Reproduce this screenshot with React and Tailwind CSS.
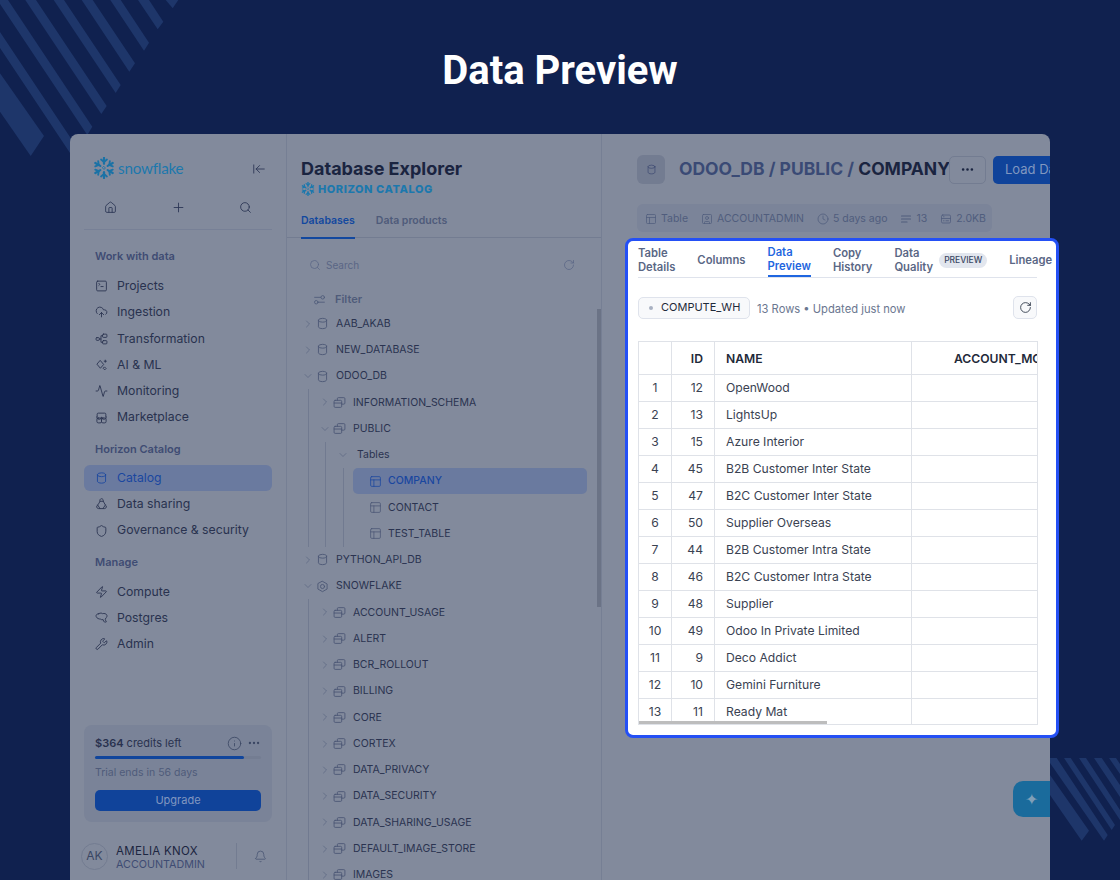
import React from 'react';
import {
  House, Plus, Search, ArrowLeftToLine, SquareTerminal, CloudUpload, Activity, Shield, Zap, Wrench,
  Bell, Info, Ellipsis, RotateCw, ChevronRight, ChevronDown, Clock, SquareUser, PanelsTopLeft,
} from 'lucide-react';

const inter = { fontFamily: 'Inter, sans-serif' };

const Ico = ({ children, className = 'w-[14px] h-[14px]' }) => (
  <svg viewBox="0 0 24 24" fill="none" stroke="currentColor" strokeWidth="1.6" strokeLinecap="round" strokeLinejoin="round" className={className}>
    {children}
  </svg>
);

const Db = (p) => <Ico {...p}><ellipse cx="12" cy="6" rx="7.5" ry="3.5" /><path d="M4.5 6v12c0 1.9 3.4 3.5 7.5 3.5s7.5-1.6 7.5-3.5V6" /></Ico>;
const Schema = (p) => <Ico {...p}><path d="M8 8V5a2 2 0 0 1 2-2h10a2 2 0 0 1 2 2v8a2 2 0 0 1-2 2h-4" /><rect x="2" y="8" width="14" height="13" rx="2" /><path d="M2 13h14" /></Ico>;
const Hex = (p) => <Ico {...p}><path d="M12 2.5l8.5 4.8v9.4L12 21.5l-8.5-4.8V7.3z" /><circle cx="12" cy="12" r="3.8" /></Ico>;
const FilterIco = (p) => <Ico {...p}><path d="M3 8h11M10 17h11" /><circle cx="18" cy="8" r="3.2" /><circle cx="6" cy="17" r="3.2" /></Ico>;
const Transform = (p) => <Ico {...p}><rect x="2" y="9.5" width="6" height="5" rx="1.5" /><rect x="14" y="3" width="8" height="6" rx="1.5" /><rect x="14" y="15" width="8" height="6" rx="1.5" /><path d="M8 12h3M14 6h-3v12h3" /></Ico>;
const Spark = (p) => <Ico {...p}><path d="M10 4l6 7-6 7-6-7z" /><path d="M18 16l2.5 2.5L18 21l-2.5-2.5z" /><path d="M19 3v4M17 5h4" /></Ico>;
const Market = (p) => <Ico {...p}><path d="M4 10V5a2 2 0 0 1 2-2h12a2 2 0 0 1 2 2v5" /><path d="M3 10a4.5 4.5 0 0 0 9 0 4.5 4.5 0 0 0 9 0" /><rect x="3.5" y="12" width="8.5" height="9" rx="2.5" /><rect x="12" y="12" width="8.5" height="9" rx="2.5" /></Ico>;
const Share = (p) => <Ico {...p}><path d="M9 6.5a3.2 3.2 0 1 1 6 0l4 7.2a3.6 3.6 0 0 1-1.5 6.8h-11a3.6 3.6 0 0 1-1.5-6.8z" /><path d="M9 7l6 0M5 14l4 6M19 14l-4 6" /></Ico>;
const Elephant = (p) => <Ico {...p}><path d="M7 4c3-2 6-1 7 0 3-1 7 0 8 3 .6 2-.5 4-2 5l-1 3c0 2 2 3 2 4-1 1-4 1-5-1l-1-3c-2 .5-4 0-5-1-2 0-7-1-8-5-.6-3 2-5 5-5z" /></Ico>;
const Rows = (p) => <Ico {...p}><path d="M3 6h18M3 12h18M3 18h11" strokeWidth="2.4" /></Ico>;
const Storage = (p) => <Ico {...p}><rect x="3" y="4" width="18" height="16" rx="2.5" /><path d="M3 11h18" /><path d="M7 7.5h1M7 15.5h1M12 15.5h5" /></Ico>;

// six armed mark, drawn from one arm rotated round the centre
const Flake = ({ className, color }) => (
  <svg viewBox="-12 -12 24 24" className={className} fill="none" stroke={color} strokeLinecap="round">
    {[0, 60, 120, 180, 240, 300].map((r) => (
      <g key={r} transform={`rotate(${r})`}>
        <path d="M0 -4.6V-11" strokeWidth="2.4" />
        <path d="M-3.2 -9.2L0 -6.6L3.2 -9.2" strokeWidth="2" />
      </g>
    ))}
    <path d="M0 -1.6L1.5 0L0 1.6L-1.5 0Z" strokeWidth="1" />
  </svg>
);

const Label = ({ children, className = '' }) => (
  <div className={`h-[16px] flex items-center px-[11px] text-[11px] font-semibold text-[#3f4c73] ${className}`}>{children}</div>
);

const NavItem = ({ icon: Icon, label, active }) => (
  <div className={`h-[26.3px] flex items-center gap-[9px] px-[11px] rounded-[6px] text-[12.25px] ${active ? 'bg-[#6a7a9f] text-[#1a479f]' : 'text-[#29324f]'}`}>
    <span className="w-[13px] flex justify-center"><Icon className="w-[14px] h-[14px]" strokeWidth={1.6} /></span>
    {label}
  </div>
);

const Sidebar = () => (
  <aside className="w-[217px] shrink-0 border-r border-[#767f94] flex flex-col px-[14px]">
    <div className="h-[33px] mt-[18px] flex items-center justify-between pl-[9px] pr-[6px]">
      <div className="flex items-center gap-[3px]">
        <Flake className="w-[22px] h-[22px]" color="#1a72a6" />
        <span className="text-[#1c78ad] text-[15.2px] font-normal tracking-[-0.2px]" style={{ fontFamily: 'Lato, sans-serif' }}>snowflake</span>
      </div>
      <ArrowLeftToLine className="w-[14px] h-[14px] text-[#2c3655]" strokeWidth={1.5} />
    </div>
    <div className="flex items-center justify-between h-[26px] mt-[9px] px-[20px] text-[#2c3655]">
      <House className="w-[13px] h-[13px]" strokeWidth={1.6} />
      <Plus className="w-[15px] h-[15px]" strokeWidth={1.4} />
      <Search className="w-[13px] h-[13px]" strokeWidth={1.6} />
    </div>
    <div className="h-px bg-[#778096] mt-[9px]" />
    <Label className="mt-[18px]">Work with data</Label>
    <div className="mt-[9px]">
      <NavItem icon={SquareTerminal} label="Projects" />
      <NavItem icon={CloudUpload} label="Ingestion" />
      <NavItem icon={Transform} label="Transformation" />
      <NavItem icon={Spark} label="AI & ML" />
      <NavItem icon={Activity} label="Monitoring" />
      <NavItem icon={Market} label="Marketplace" />
    </div>
    <Label className="mt-[10px]">Horizon Catalog</Label>
    <div className="mt-[8px]">
      <NavItem icon={Db} label="Catalog" active />
      <NavItem icon={Share} label="Data sharing" />
      <NavItem icon={Shield} label="Governance & security" />
    </div>
    <Label className="mt-[11px]">Manage</Label>
    <div className="mt-[8px]">
      <NavItem icon={Zap} label="Compute" />
      <NavItem icon={Elephant} label="Postgres" />
      <NavItem icon={Wrench} label="Admin" />
    </div>
    <div className="mt-auto h-[97px] rounded-[8px] bg-[#7a8398] px-[11px] pt-[9px]">
      <div className="flex items-center justify-between h-[18px] text-[11px] text-[#29324f]">
        <span><b className="font-semibold">$364</b> credits left</span>
        <span className="flex items-center gap-[5px] text-[#3a4663]">
          <Info className="w-[15px] h-[15px]" strokeWidth={1.3} />
          <Ellipsis className="w-[14px] h-[14px]" strokeWidth={2} />
        </span>
      </div>
      <div className="h-[3px] rounded-full bg-[#747d92] mt-[4px]">
        <div className="h-full w-[90%] rounded-full bg-[#10459c]" />
      </div>
      <div className="text-[10.5px] text-[#4f5b7a] mt-[7px] leading-[14px]">Trial ends in 56 days</div>
      <div className="h-[21px] mt-[10px] rounded-[5px] bg-[#10439a] text-[#8197c0] text-[11px] font-normal flex items-center justify-center">Upgrade</div>
    </div>
    <div className="h-[30px] mt-[19px] mb-[9px] -ml-[3px] flex items-center">
      <div className="w-[27px] h-[27px] rounded-full border border-[#737c91] flex items-center justify-center text-[12px] text-[#3a4663] shrink-0">AK</div>
      <div className="ml-[8px] w-[120px] pt-[3px]">
        <div className="text-[11.5px] font-normal leading-[14px] text-[#1c2540] tracking-[0.3px]">AMELIA KNOX</div>
        <div className="text-[10.75px] leading-[14px] text-[#3f4c73]">ACCOUNTADMIN</div>
      </div>
      <div className="w-px h-[26px] bg-[#737c91]" />
      <Bell className="w-[13px] h-[13px] ml-[17px] text-[#4a5674]" strokeWidth={1.5} />
    </div>
  </aside>
);

const Row = ({ chevron, icon: Icon, children, iconGap = true }) => (
  <div className="h-[26.25px] flex items-center text-[10.5px] text-[#2a3350] whitespace-nowrap">
    <span className="w-[10px] flex justify-center text-[#525e7c]">
      {chevron === 'down' ? <ChevronDown className="w-[12px] h-[12px] shrink-0" strokeWidth={1.2} /> : <ChevronRight className="w-[12px] h-[12px] shrink-0" strokeWidth={1.2} />}
    </span>
    {iconGap && <span className="ml-[4px] w-[10px] flex justify-center text-[#4a5674]"><Icon className="w-[13px] h-[13px] shrink-0" /></span>}
    <span className="ml-[9px]">{children}</span>
  </div>
);

const Guide = ({ children, pad = 'pl-[11px]' }) => (
  <div className={`ml-[5px] border-l border-[#717a90] ${pad}`}>{children}</div>
);

const TableRow = ({ label, active }) => (
  <div className={`h-[26.25px] w-[234px] flex items-center pl-[16px] rounded-[5px] text-[10.5px] ${active ? 'bg-[#6a7a9f] text-[#1a479f] font-medium' : 'text-[#2a3350]'}`}>
    <PanelsTopLeft className={`w-[13px] h-[13px] ${active ? 'text-[#1a479f]' : 'text-[#4a5674]'}`} strokeWidth={1.4} />
    <span className="ml-[6px]">{label}</span>
  </div>
);

const schemas = ['ACCOUNT_USAGE', 'ALERT', 'BCR_ROLLOUT', 'BILLING', 'CORE', 'CORTEX', 'DATA_PRIVACY', 'DATA_SECURITY', 'DATA_SHARING_USAGE', 'DEFAULT_IMAGE_STORE', 'IMAGES'];

const Explorer = () => (
  <section className="relative w-[315px] shrink-0 border-r border-[#767f94]">
    <div className="border-b border-[#737c91] h-[104px] px-[14px] pt-[23px]">
      <div className="text-[18px] leading-[24px] font-bold text-[#1a2440]">Database Explorer</div>
      <div className="flex items-center gap-[3px] h-[14px] mt-[1px]">
        <Flake className="w-[14px] h-[14px]" color="#1c78ad" />
        <span className="text-[11px] font-extrabold tracking-[0.56px] text-[#1c78ad]">HORIZON CATALOG</span>
      </div>
      <div className="flex gap-[21px] mt-[11px] text-[10.5px] font-semibold">
        <span className="h-[32px] flex items-start pt-[6px] border-b-2 border-[#12489f] text-[#12489f]">Databases</span>
        <span className="pt-[6px] text-[#4f5b7a]">Data products</span>
      </div>
    </div>
    <div className="h-[34px] mt-[10px] pl-[22px] pr-[26px] flex items-center justify-between text-[#5a6685]">
      <span className="flex items-center gap-[5px] text-[10px]"><Search className="w-[12px] h-[12px]" strokeWidth={1.5} />Search</span>
      <RotateCw className="w-[12px] h-[12px]" strokeWidth={1.5} />
    </div>
    <div className="h-[22px] mt-[6px] pl-[26px] flex items-center gap-[9px] text-[11px] font-semibold text-[#4f5b7a]">
      <FilterIco className="w-[13px] h-[13px]" />Filter
    </div>
    <div className="pl-[16px] mt-[0.5px]">
      <Row icon={Db}>AAB_AKAB</Row>
      <Row icon={Db}>NEW_DATABASE</Row>
      <Row icon={Db} chevron="down">ODOO_DB</Row>
      <Guide>
        <Row icon={Schema}>INFORMATION_SCHEMA</Row>
        <Row icon={Schema} chevron="down">PUBLIC</Row>
        <Guide pad="pl-[12px]">
          <Row chevron="down" iconGap={false}>Tables</Row>
          <Guide pad="pl-[9px]">
            <TableRow label="COMPANY" active />
            <TableRow label="CONTACT" />
            <TableRow label="TEST_TABLE" />
          </Guide>
        </Guide>
      </Guide>
      <Row icon={Db}>PYTHON_API_DB</Row>
      <Row icon={Hex} chevron="down">SNOWFLAKE</Row>
      <Guide>
        {schemas.map((s) => <Row key={s} icon={Schema}>{s}</Row>)}
      </Guide>
    </div>
    <div className="absolute right-0 top-[175px] w-[4px] h-[298px] bg-[#6b7386]" />
  </section>
);

const Meta = ({ icon: Icon, children }) => (
  <span className="flex items-center gap-[4px]"><Icon className="w-[12px] h-[12px]" strokeWidth={1.5} />{children}</span>
);

const Main = () => (
  <section className="flex-1 min-w-0 pl-[35px] pt-[21px]">
    <div className="flex items-center h-[29px] whitespace-nowrap">
      <div className="w-[28px] h-[29px] rounded-[6px] bg-[#737c91] flex items-center justify-center text-[#3f4c73] shrink-0"><Db className="w-[11px] h-[11px]" /></div>
      <div className="ml-[14px] w-[270px] shrink-0 text-[17.5px] leading-[26px] pb-[2px] font-bold text-[#3a4a75]">ODOO_DB / PUBLIC / <span className="text-[#1a2440]">COMPANY</span></div>
      <div className="w-[37px] h-[28px] rounded-[5px] border border-[#737c91] flex items-center justify-center text-[#1a2440] shrink-0"><Ellipsis className="w-[15px] h-[15px]" strokeWidth={2.2} /></div>
      <div className="ml-[7px] w-[90px] h-[28px] rounded-[5px] bg-[#10439a] text-[#8197c0] text-[13px] font-normal pl-[12px] flex items-center shrink-0">Load Data</div>
    </div>
    <div className="w-[355px] h-[28px] mt-[20px] pt-px rounded-[6px] bg-[#7b8499] pl-[8px] flex items-center gap-[13px] text-[10.5px] text-[#505d7d] whitespace-nowrap">
      <Meta icon={PanelsTopLeft}>Table</Meta>
      <Meta icon={SquareUser}>ACCOUNTADMIN</Meta>
      <Meta icon={Clock}>5 days ago</Meta>
      <Meta icon={Rows}>13</Meta>
      <Meta icon={Storage}>2.0KB</Meta>
    </div>
  </section>
);

const Tab = ({ children, active }) => (
  <div className={`relative shrink-0 h-full flex items-center text-[11.25px] leading-[14px] font-semibold ${active ? 'text-[#1f66e0]' : 'text-[#5a6785]'}`}>
    <span className={active ? 'border-b-2 border-[#1f66e0] h-full flex items-center' : ''}>{children}</span>
  </div>
);

const rows = [
  [1, 12, 'OpenWood'], [2, 13, 'LightsUp'], [3, 15, 'Azure Interior'], [4, 45, 'B2B Customer Inter State'],
  [5, 47, 'B2C Customer Inter State'], [6, 50, 'Supplier Overseas'], [7, 44, 'B2B Customer Intra State'],
  [8, 46, 'B2C Customer Intra State'], [9, 48, 'Supplier'], [10, 49, 'Odoo In Private Limited'],
  [11, 9, 'Deco Addict'], [12, 10, 'Gemini Furniture'], [13, 11, 'Ready Mat'],
];

const Card = () => (
  <div className="absolute left-[625px] top-[238px] w-[434px] h-[500px] rounded-[8px] border-[3px] border-[#2450f5] bg-white overflow-hidden pl-[10px]">
    <div className="w-[399px] h-[37px] pt-[2px] flex gap-[22px] border-b border-[#dfe3ec]">
      <Tab>Table<br />Details</Tab>
      <Tab>Columns</Tab>
      <Tab active>Data<br />Preview</Tab>
      <Tab>Copy<br />History</Tab>
      <div className="flex items-center gap-[6px] shrink-0">
        <Tab>Data<br />Quality</Tab>
        <span className="w-[48px] h-[15px] rounded-full bg-[#e2e6ee] text-[8.5px] font-medium text-[#3a4663] flex items-center justify-center">PREVIEW</span>
      </div>
      <Tab>Lineage</Tab>
    </div>
    <div className="w-[399px] h-[23px] mt-[18px] flex items-center">
      <div className="w-[112px] h-[22px] rounded-[5px] border border-[#dfe3ec] bg-[#f8f9fb] flex items-center pl-[10px] text-[11px] font-normal text-[#1f2a3a]">
        <span className="w-[4px] h-[4px] rounded-full bg-[#a9b1c2]" />
        <span className="ml-[8px]">COMPUTE_WH</span>
      </div>
      <span className="ml-[7px] mt-[3px] text-[11.2px] text-[#6b7790]">13 Rows • Updated just now</span>
      <div className="ml-auto w-[24px] h-[23px] rounded-[5px] border border-[#dfe3ec] bg-[#f8f9fb] flex items-center justify-center text-[#1f2a3a]"><RotateCw className="w-[13px] h-[13px]" strokeWidth={1.5} /></div>
    </div>
    <div className="relative w-[400px] h-[384px] mt-[22px] border border-[#dfe2e8] overflow-hidden text-[12.15px] text-[#3a4252]">
      <div className="grid grid-cols-[33px_43px_197px_126px] h-[33px] border-b border-[#dfe2e8] items-stretch font-semibold text-[#1f2a3a] whitespace-nowrap">
        <div className="border-r border-[#dfe2e8]" />
        <div className="border-r border-[#dfe2e8] pr-[11px] pt-[2px] flex items-center justify-end">ID</div>
        <div className="border-r border-[#dfe2e8] pl-[11px] pt-[2px] flex items-center">NAME</div>
        <div className="pl-[42px] pt-[2px] flex items-center overflow-hidden">ACCOUNT_MOVE</div>
      </div>
      {rows.map(([n, id, name]) => (
        <div key={n} className="grid grid-cols-[33px_43px_197px_126px] h-[27px] border-b border-[#dfe2e8] last:border-b-0 items-stretch">
          <div className="border-r border-[#dfe2e8] flex items-center justify-center">{n}</div>
          <div className="border-r border-[#dfe2e8] pr-[11px] flex items-center justify-end">{id}</div>
          <div className="border-r border-[#dfe2e8] pl-[11px] flex items-center">{name}</div>
          <div />
        </div>
      ))}
      <div className="absolute left-0 bottom-0 w-[188px] h-[3px] bg-[#bdbdbd]" />
    </div>
  </div>
);

export default function App() {
  return (
    <div className="relative w-[1120px] h-[880px] overflow-hidden bg-[#10214f]" style={inter}>
      <svg className="absolute inset-0 w-[1120px] h-[880px]" fill="#1e366a">
        <polygon points="172.7,8.3 178.3,0 165.7,0" />
        <polygon points="157.7,29.3 163.3,21.7 149,0 138,0" />
        <polygon points="144,50.7 149,42.7 120.7,0 110.3,0" />
        <polygon points="129.3,71.7 135,63.3 92.7,0 81.7,0" />
        <polygon points="115.7,93 120.7,85 64,0 53.7,0" />
        <polygon points="101.3,114 106.7,106 36,0 25.3,0" />
        <polygon points="87.3,135 92.3,126.7 8,0 0,0 0,4" />
        <polygon points="0,32 80,152 70,153 0,48" />
        <polygon points="0,73.3 44,136 30.7,156 0,111.7" />
        <polygon points="1050,775 1089,830.7 1081.7,840.7 1050,795" />
        <polygon points="1050,758 1056.7,758 1107.7,835 1104,840.7 1050,763" />
        <polygon points="1064,758 1070.7,758 1115,825 1111.7,830" />
        <polygon points="1079,758 1086,758 1120,810 1120,820" />
        <polygon points="1094,758 1101.7,758 1120,785 1120,797" />
        <polygon points="1109,758 1116,758 1120,764 1120,774" />
      </svg>
      <h1 className="relative h-[134px] pt-[7px] flex items-center justify-center text-white text-[40px] font-bold" style={{ fontFamily: 'Roboto, sans-serif' }}>Data Preview</h1>
      <div className="relative mx-[70px] h-[746px] rounded-t-[8px] bg-[#828a9c] overflow-hidden flex">
        <Sidebar />
        <Explorer />
        <Main />
        <div className="absolute right-0 top-[647px] w-[37px] h-[36px] rounded-l-[10px] bg-[#1a6b9c] text-[#7f9fb8] text-[16px] flex items-center justify-center">✦</div>
      </div>
      <Card />
    </div>
  );
}
